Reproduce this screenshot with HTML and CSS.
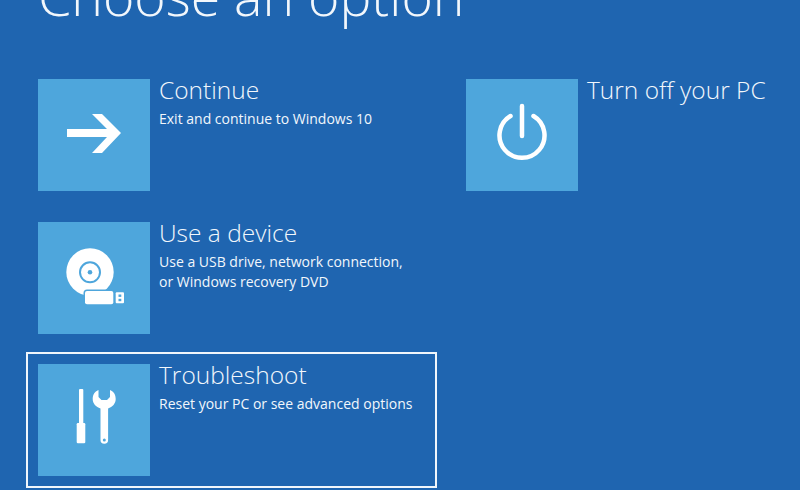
FILE: index.html
```html
<!DOCTYPE html>
<html lang="en">

<head>
    <meta charset="UTF-8">
    <title>Choose an option</title>
    <link rel="stylesheet" href="styles.css">
</head>

<body>
    <div class="screen">
        <h1 class="screen-title">Choose an option</h1>
        <div class="columns">
            <ul class="option-list">
                <li class="option">
                    <div class="option-tile">
                        <svg class="option-icon" viewBox="0 0 112 112">
                            <polygon class="icon-fill" points="29,50 69,50 54,35 64,35 83,54 64,74 54,74 69,58 29,58" />
                        </svg>
                    </div>
                    <div class="option-text">
                        <h2 class="option-name">Continue</h2>
                        <p class="option-desc">Exit and continue to Windows 10</p>
                    </div>
                </li>
                <li class="option">
                    <div class="option-tile">
                        <svg class="option-icon" viewBox="0 0 112 112">
                            <circle class="icon-fill" cx="52" cy="50" r="23.7" />
                            <circle class="icon-cut-line" cx="52" cy="50.3" r="10" />
                            <circle class="icon-cut" cx="52" cy="50.3" r="2.3" />
                            <rect class="icon-fill icon-gap" x="47" y="69" width="28.3" height="13.3" rx="2" />
                            <rect class="icon-fill" x="77.7" y="70.3" width="8.3" height="11" rx="1" />
                            <rect class="icon-cut" x="80.5" y="72.5" width="2.8" height="2.4" />
                            <rect class="icon-cut" x="80.5" y="76.8" width="2.8" height="2.4" />
                        </svg>
                    </div>
                    <div class="option-text">
                        <h2 class="option-name">Use a device</h2>
                        <p class="option-desc">Use a USB drive, network connection,<br>or Windows recovery DVD</p>
                    </div>
                </li>
                <li class="option option-active">
                    <div class="option-tile">
                        <svg class="option-icon" viewBox="0 0 112 112">
                            <rect class="icon-fill" x="41" y="25" width="4.3" height="36" rx="1" />
                            <rect class="icon-fill" x="38.7" y="59" width="8.6" height="20.3" rx="1.2" />
                            <path class="icon-fill" d="M60.5 26C56.5 27.5 54.7 31 54.7 35C54.7 39.5 58 43 62.5 44.5L62.5 76A3.8 3.8 0 0 0 70.1 76L70.1 44.5C74.5 43 77.7 39.5 77.7 35C77.7 31 76 27.5 72 26L72 33L69 36L63.5 36L60.5 33Z" />
                            <circle class="icon-cut" cx="66.3" cy="76" r="1.5" />
                        </svg>
                    </div>
                    <div class="option-text">
                        <h2 class="option-name">Troubleshoot</h2>
                        <p class="option-desc">Reset your PC or see advanced options</p>
                    </div>
                </li>
            </ul>
            <ul class="option-list">
                <li class="option">
                    <div class="option-tile">
                        <svg class="option-icon" viewBox="0 0 112 112">
                            <path class="icon-line" d="M44.5 37A22.5 22.5 0 1 0 67.5 37" />
                            <line class="icon-line" x1="56" y1="27" x2="56" y2="57" />
                        </svg>
                    </div>
                    <div class="option-text">
                        <h2 class="option-name">Turn off your PC</h2>
                    </div>
                </li>
            </ul>
        </div>
    </div>
</body>

</html>
```
FILE: styles.css
```css
* {
    padding: 0;
    margin: 0;
    list-style: none;
    box-sizing: border-box;
}

body {
    background: #1f65b0;
    color: #f2f7fc;
    font-family: "Open Sans", "Liberation Sans", sans-serif;
    overflow: hidden;
}

.screen {
    width: 800px;
    height: 490px;
    padding-left: 26px;
    overflow: hidden;
}

/*title is cut off by the top of the window*/
.screen-title {
    height: 67px;
    margin-top: -38px;
    margin-bottom: 38px;
    padding-left: 12px;
    font-size: 53.6px;
    font-weight: 300;
    line-height: 67px;
    white-space: nowrap;
}

.columns {
    display: flex;
    gap: 17px;
}

.option-list {
    flex: none;
    display: flex;
    flex-direction: column;
    gap: 7px;
    width: 411px;
}

.option {
    display: flex;
    gap: 9px;
    height: 136px;
    padding: 10px;
    border: 2px solid transparent;
}

.option-active {
    margin-top: -1px;
    border-color: #f0f6fb;
}

.option-tile {
    flex: none;
    width: 112px;
    height: 112px;
    background: #4ea6dc;
}

.option-icon {
    display: block;
    width: 112px;
    height: 112px;
}

.icon-fill {
    fill: #fff;
}

.icon-gap {
    stroke: #4ea6dc;
    stroke-width: 3;
    paint-order: stroke;
}

.icon-cut {
    fill: #4ea6dc;
}

.icon-cut-line {
    fill: none;
    stroke: #4ea6dc;
    stroke-width: 2;
}

.icon-line {
    fill: none;
    stroke: #fff;
    stroke-width: 4.5;
    stroke-linecap: round;
}

.option-name {
    font-size: 24.5px;
    font-weight: 300;
    line-height: 22px;
}

.option-desc {
    margin-top: 8px;
    font-size: 14px;
    font-weight: 400;
    line-height: 20px;
    white-space: nowrap;
}
```
